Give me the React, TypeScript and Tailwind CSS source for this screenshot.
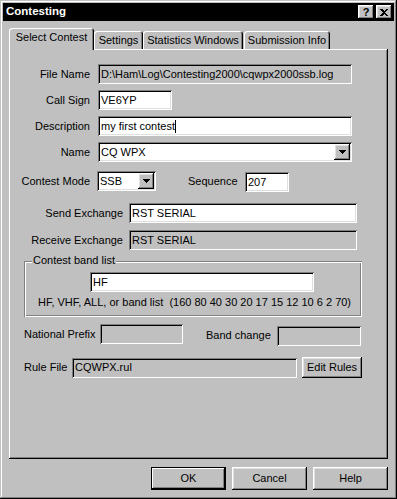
import React from 'react';

const raised = 'shadow-[inset_-1px_-1px_#000,inset_1px_1px_#fff,inset_-2px_-2px_#808080,inset_2px_2px_#dfdfdf]';
const sunken = 'shadow-[inset_1px_1px_#808080,inset_-1px_-1px_#fff,inset_2px_2px_#000,inset_-2px_-2px_#dfdfdf]';
const sunkenGrey = 'shadow-[inset_1px_1px_#808080,inset_-1px_-1px_#fff,inset_2px_2px_#000,inset_-2px_-2px_#c0c0c0]';

function Field({ value, w, disabled, cursor }: { value?: string; w: string; disabled?: boolean; cursor?: boolean }) {
  return (
    <div
      className={`${w} h-[20px] shrink-0 ${disabled ? `bg-[#c0c0c0] ${sunkenGrey}` : `bg-white ${sunken}`} flex items-center pl-[3px] overflow-hidden whitespace-nowrap`}
    >
      {value}
      {cursor && <span className="inline-block w-px h-[13px] bg-black" />}
    </div>
  );
}

function Arrow() {
  return (
    <svg width="7" height="4" viewBox="0 0 7 4" shapeRendering="crispEdges">
      <rect x="0" y="0" width="7" height="1" fill="#000" />
      <rect x="1" y="1" width="5" height="1" fill="#000" />
      <rect x="2" y="2" width="3" height="1" fill="#000" />
      <rect x="3" y="3" width="1" height="1" fill="#000" />
    </svg>
  );
}

function Combo({ value, w }: { value: string; w: string }) {
  return (
    <div className={`${w} h-[20px] shrink-0 bg-white ${sunken} flex items-center p-[2px]`}>
      <span className="flex-1 pl-[1px]">{value}</span>
      <div className={`w-[16px] h-[16px] bg-[#c0c0c0] ${raised} flex items-center justify-center`}>
        <Arrow />
      </div>
    </div>
  );
}

function Button({ label, w, def }: { label: string; w: string; def?: boolean }) {
  return (
    <div
      className={`${w} h-[23px] shrink-0 bg-[#c0c0c0] flex items-center justify-center ${
        def ? 'border border-black shadow-[inset_-1px_-1px_#000,inset_1px_1px_#fff,inset_-2px_-2px_#808080]' : raised
      }`}
    >
      {label}
    </div>
  );
}

function Tab({ label, w, active, className = '' }: { label: string; w: string; active?: boolean; className?: string }) {
  return (
    <div
      className={`${w} ${
        active ? 'h-[22px] -mb-px relative z-10 pb-[3px]' : 'h-[18px]'
      } ${className} bg-[#c0c0c0] rounded-t-[3px] flex items-center justify-center shadow-[inset_1px_1px_#fff,inset_-1px_0_#000,inset_-2px_0_#808080]`}
    >
      {label}
    </div>
  );
}

export default function App() {
  return (
    <div className="w-[397px] h-[499px] bg-[#c0c0c0] p-[3px] flex flex-col text-[11px] text-black font-['Liberation_Sans',Arial,sans-serif] shadow-[inset_-1px_-1px_#000,inset_1px_1px_#c0c0c0,inset_-2px_-2px_#808080,inset_2px_2px_#fff] select-none">
      {/* title bar */}
      <div className="h-[18px] bg-black flex items-center pl-[3px] pr-[2px]">
        <span className="flex-1 text-white font-bold text-[11.5px]">Contesting</span>
        <div className={`w-[16px] h-[14px] bg-[#c0c0c0] ${raised} flex items-center justify-center font-bold text-[11px] leading-none`}>?</div>
        <div className={`w-[16px] h-[14px] ml-[2px] bg-[#c0c0c0] ${raised} flex items-center justify-center`}>
          <svg width="8" height="7" viewBox="0 0 8 7" shapeRendering="crispEdges">
            <path d="M0 0h2l2 2 2-2h2L5 3.5 8 7H6L4 5 2 7H0l3-3.5z" fill="#000" />
          </svg>
        </div>
      </div>

      <div className="flex flex-col px-[6px] mt-[7px]">
        {/* tabs */}
        <div className="h-[21px] flex items-end">
          <Tab label="Select Contest" w="w-[85px]" active />
          <Tab label="Settings" w="w-[49px]" />
          <Tab label="Statistics Windows" w="w-[100px]" />
          <Tab label="Submission Info" w="w-[86px]" className="ml-px" />
        </div>

        {/* panel */}
        <div className="h-[410px] bg-[#c0c0c0] flex flex-col pt-[15px] shadow-[inset_-1px_-1px_#000,inset_1px_1px_#fff,inset_-2px_-2px_#808080]">
          <div className="flex items-center">
            <span className="w-[81px] text-right">File Name</span>
            <div className="ml-[8px]">
              <Field value="D:\Ham\Log\Contesting2000\cqwpx2000ssb.log" w="w-[254px]" disabled />
            </div>
          </div>
          <div className="flex items-center mt-[6px]">
            <span className="w-[81px] text-right">Call Sign</span>
            <div className="ml-[8px]">
              <Field value="VE6YP" w="w-[74px]" />
            </div>
          </div>
          <div className="flex items-center mt-[6px]">
            <span className="w-[81px] text-right">Description</span>
            <div className="ml-[8px]">
              <Field value="my first contest" w="w-[254px]" cursor />
            </div>
          </div>
          <div className="flex items-center mt-[6px]">
            <span className="w-[81px] text-right">Name</span>
            <div className="ml-[8px]">
              <Combo value="CQ WPX" w="w-[254px]" />
            </div>
          </div>
          <div className="flex items-center mt-[8px]">
            <span className="w-[81px] text-right">Contest Mode</span>
            <div className="ml-[7px]">
              <Combo value="SSB" w="w-[59px]" />
            </div>
            <span className="ml-[32px] w-[57px]">Sequence</span>
            <div className="mt-[2px]">
              <Field value="207" w="w-[44px]" />
            </div>
          </div>
          <div className="flex items-center mt-[11px]">
            <span className="w-[114px] text-right">Send Exchange</span>
            <div className="ml-[6px]">
              <Field value="RST SERIAL" w="w-[228px]" />
            </div>
          </div>
          <div className="flex items-center mt-[7px]">
            <span className="w-[114px] text-right">Receive Exchange</span>
            <div className="ml-[6px]">
              <Field value="RST SERIAL" w="w-[228px]" disabled />
            </div>
          </div>

          {/* group box */}
          <div className="relative ml-[15px] mt-[11px] w-[338px] h-[56px] flex flex-col shadow-[inset_1px_1px_#808080,inset_-1px_-1px_#fff,inset_2px_2px_#fff,inset_-2px_-2px_#808080]">
            <span className="absolute left-[8px] -top-[7px] px-px bg-[#c0c0c0] leading-[13px]">Contest band list</span>
            <div className="ml-[66px] mt-[11px]">
              <Field value="HF" w="w-[224px]" />
            </div>
            <div className="mt-[4px] text-center whitespace-pre leading-[13px] pl-[3px]">
              HF, VHF, ALL, or band list  (160 80 40 30 20 17 15 12 10 6 2 70)
            </div>
          </div>

          <div className="flex items-start mt-[7px] ml-[15px]">
            <span className="w-[76px] h-[20px] flex items-center">National Prefix</span>
            <Field w="w-[83px]" disabled />
            <span className="ml-[23px] w-[71px] h-[20px] mt-[1px] flex items-center">Band change</span>
            <div className="mt-[2px]">
              <Field w="w-[84px]" disabled />
            </div>
          </div>

          <div className="flex items-center mt-[11px] ml-[15px]">
            <span className="w-[48px]">Rule File</span>
            <Field value="CQWPX.rul" w="w-[225px]" disabled />
            <div className="ml-[5px]">
              <div className={`w-[60px] h-[21px] bg-[#c0c0c0] flex items-center justify-center ${raised}`}>Edit Rules</div>
            </div>
          </div>
        </div>

        {/* dialog buttons */}
        <div className="flex justify-end mt-[8px]">
          <Button label="OK" w="w-[75px]" def />
          <div className="ml-[6px]">
            <Button label="Cancel" w="w-[75px]" />
          </div>
          <div className="ml-[6px]">
            <Button label="Help" w="w-[75px]" />
          </div>
        </div>
      </div>
    </div>
  );
}
